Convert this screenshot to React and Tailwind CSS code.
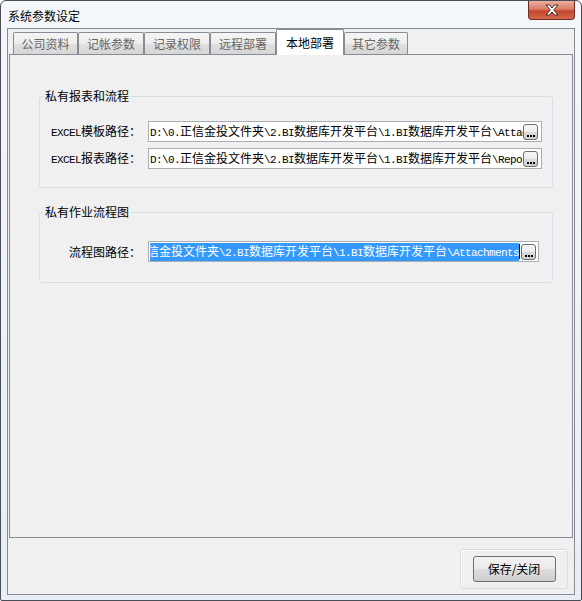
import React from "react";

const tabs = ["公司资料", "记帐参数", "记录权限", "远程部署", "本地部署", "其它参数"];
const tabWidths = ["w-[65px]", "w-[66px]", "w-[66px]", "w-[66px]", "w-[68px]", "w-[64px]"];
const ACTIVE = 4;

const pathA = "D:\\0.正信金投文件夹\\2.BI数据库开发平台\\1.BI数据库开发平台\\Attachments";
const pathR = "D:\\0.正信金投文件夹\\2.BI数据库开发平台\\1.BI数据库开发平台\\Reports";

// ascii runs get a narrow mono face, the rest stays CJK
const Mixed = ({ text }) =>
  text.match(/[\x00-\x7f]+|[^\x00-\x7f]+/g).map((s, i) =>
    /^[\x00-\x7f]/.test(s) ? (
      <span key={i} className="font-['Liberation_Mono'] text-[11px] tracking-[-0.6px]">
        {s}
      </span>
    ) : (
      <span key={i}>{s}</span>
    )
  );

const DotsButton = () => (
  <div className="w-[15px] h-[16px] shrink-0 rounded-[3px] border border-[#707070] bg-[linear-gradient(to_bottom,#f6f6f6_0%,#ececec_50%,#dcdcdc_51%,#cdcdcd_100%)] flex items-end justify-center gap-[1px] pb-[2px]">
    <span className="w-[2px] h-[2px] bg-black" />
    <span className="w-[2px] h-[2px] bg-black" />
    <span className="w-[2px] h-[2px] bg-black" />
  </div>
);

const PathRow = ({ label, text }) => (
  <div className="flex items-center h-[21px]">
    <div className="w-[108px] shrink-0 text-right pr-[7px] whitespace-nowrap">
      <Mixed text={label} />
    </div>
    <div className="w-[394px] h-[21px] border border-[#abadb3] bg-white flex items-center pl-[1px] pr-[3px]">
      <div className="flex-1 overflow-hidden whitespace-nowrap leading-[14px] text-black">
        <Mixed text={text} />
      </div>
      <DotsButton />
    </div>
  </div>
);

const GroupBox = ({ title, className, children }) => (
  <fieldset className={"ml-[29px] w-[514px] border border-[#d5dfe5] rounded-[3px] " + className}>
    <legend className="ml-[3px] px-[2px] leading-[14px] text-black">{title}</legend>
    {children}
  </fieldset>
);

export default function App() {
  return (
    <div className="w-[582px] h-[601px] flex flex-col border border-[#4b4f55] rounded-t-[6px] rounded-b-[2px] bg-[linear-gradient(to_bottom,#f4f7fa_0%,#e8eef5_100%)] font-['Noto_Sans_CJK_SC',sans-serif] text-[12px] overflow-hidden">
      {/* title bar */}
      <div className="h-[27px] flex justify-between items-start">
        <span className="ml-[7px] mt-[7px] leading-[16px] text-black">系统参数设定</span>
        <div className="mr-[6px] w-[47px] h-[19px] border border-t-0 border-[#6b2b22] rounded-b-[4px] bg-[linear-gradient(to_bottom,#eab0a2_0%,#dc7d66_45%,#c5452c_55%,#d3684d_100%)] flex items-center justify-center">
          <svg width="16" height="12" viewBox="0 0 16 12">
            <path
              d="M2 1h3.5L8 4l2.5-3H14l-4.2 5L14 11h-3.5L8 8l-2.5 3H2l4.2-5z"
              fill="#ffffff"
              stroke="#4a2620"
              strokeWidth="1"
              strokeLinejoin="round"
            />
          </svg>
        </div>
      </div>

      {/* client area */}
      <div className="flex-1 mx-[6px] mb-[5px] border border-[#838a93] bg-[#f0f0f0] flex flex-col">
        <div className="h-[26px] -mb-[1px] pl-[5px] flex items-end relative z-10">
          {tabs.map((t, i) =>
            i === ACTIVE ? (
              <div
                key={t}
                className={tabWidths[i] + " h-[26px] border border-b-0 border-[#898c95] rounded-t-[2px] bg-white flex items-center justify-center text-black"}
              >
                {t}
              </div>
            ) : (
              <div
                key={t}
                className={tabWidths[i] + " h-[22px] mb-[1px] border border-b-0 border-[#898c95] rounded-t-[2px] bg-[linear-gradient(to_bottom,#f5f5f5_0%,#ededed_50%,#e0e0e0_51%,#d6d6d6_100%)] flex items-center justify-center text-[#666666]"}
              >
                {t}
              </div>
            )
          )}
        </div>

        <div className="mx-[1px] h-[484px] border border-[#898c95] bg-[#f0f0f0] pt-[34px]">
          <GroupBox title="私有报表和流程" className="h-[99px]">
            <div className="pt-[18px] flex flex-col gap-[6px]">
              <PathRow label="EXCEL模板路径：" text={pathA} />
              <PathRow label="EXCEL报表路径：" text={pathR} />
            </div>
          </GroupBox>

          <GroupBox title="私有作业流程图" className="h-[78px] mt-[17px]">
            <div className="pt-[22px] flex items-center h-[43px]">
              <div className="w-[108px] shrink-0 text-right pr-[7px] whitespace-nowrap">流程图路径：</div>
              <div className="w-[391px] h-[21px] border border-[#abadb3] bg-white flex items-center pl-[1px] pr-[2px] gap-[1px]">
                <div className="flex-1 overflow-hidden whitespace-nowrap flex justify-end items-center">
                  <span className="bg-[#3399ff] text-white leading-[15px] shrink-0">
                    <Mixed text={pathA} />
                  </span>
                  <span className="w-[1px] h-[15px] bg-black shrink-0" />
                </div>
                <DotsButton />
              </div>
            </div>
          </GroupBox>
        </div>

        <div className="flex-1 flex justify-end items-end pr-[6px] pb-[5px]">
          <div className="w-[108px] h-[40px] rounded-[3px] border border-[#dcdcdc] shadow-[inset_1px_1px_0_#ffffff] flex items-center justify-center">
            <button className="w-[83px] h-[26px] rounded-[3px] border border-[#707070] bg-[linear-gradient(to_bottom,#f2f2f2_0%,#ebebeb_50%,#dddddd_51%,#cfcfcf_100%)] text-black text-[12px] leading-[14px]">
              保存/关闭
            </button>
          </div>
        </div>
      </div>
    </div>
  );
}
